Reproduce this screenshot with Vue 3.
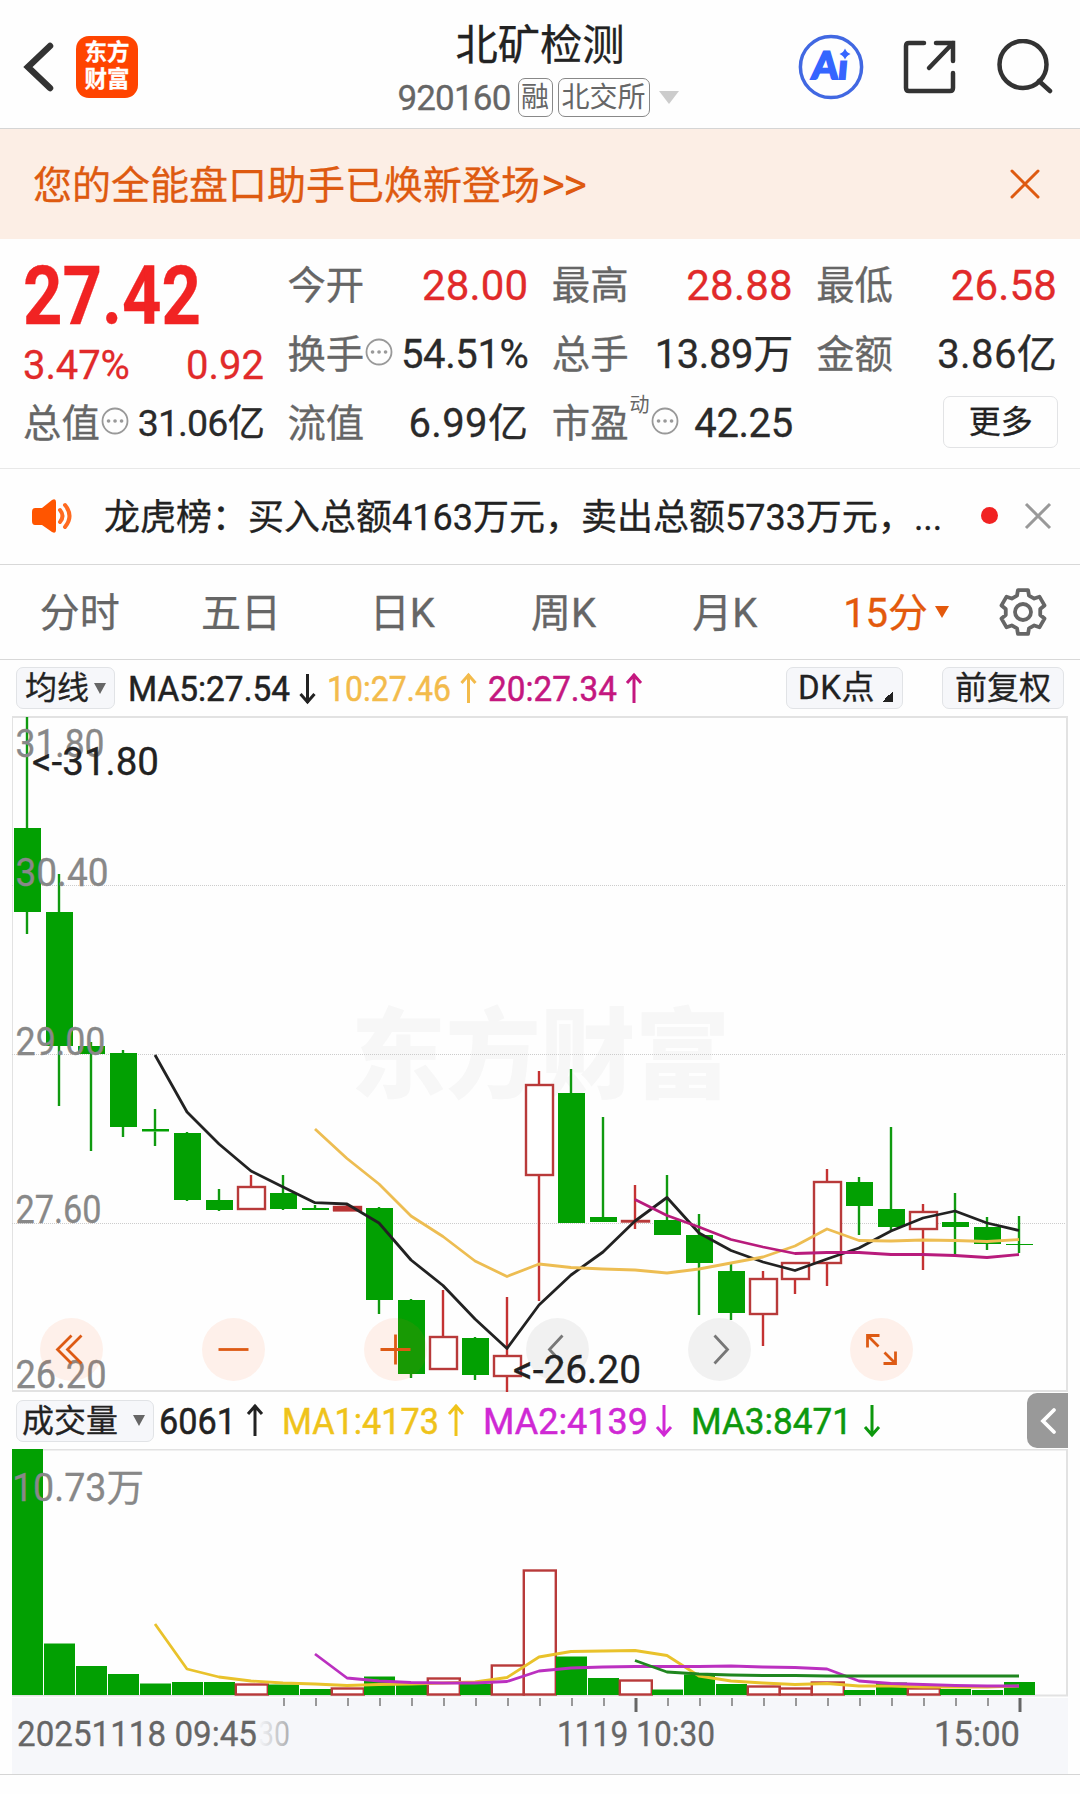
<template>
  <main class="stock-page">
    <header class="header">
      <div class="header-left">
        <svg class="back-icon" viewBox="0 0 34 56">
          <path d="M27 7 L5 28 L27 49" />
        </svg>
        <div class="brand"><span>东方</span><span>财富</span></div>
      </div>
      <div class="header-title">
        <h1>北矿检测</h1>
        <div class="stock-code">
          <span class="code">920160</span>
          <span class="tag">融</span>
          <span class="tag wide">北交所</span>
          <i class="code-arrow"></i>
        </div>
      </div>
      <div class="header-right">
        <svg class="ai-icon" viewBox="0 0 66 66">
          <text transform="translate(13 45) skewX(-5)" textLength="36" lengthAdjust="spacingAndGlyphs">Ai</text>
          <path class="ai-star-gap" d="M40 12 H54 V26.500 H40 Z" />
          <path d="M47 14.500 Q48.500 18.500 52.500 20 Q48.500 21.500 47 25.500 Q45.500 21.500 41.500 20 Q45.500 18.500 47 14.500 Z" />
          <circle cx="33" cy="33" r="30.6" />
        </svg>
        <svg class="share-icon" viewBox="0 0 56 56">
          <path d="M22 4 H7 Q4 4 4 7 V49 Q4 52 7 52 H48 Q51 52 51 49 V34 M34 4 H51 V22 M51 4 L27 29" />
        </svg>
        <svg class="search-icon" viewBox="0 0 56 56">
          <circle cx="26" cy="25.500" r="23.500" />
          <path d="M42 42 L53 52" />
        </svg>
      </div>
    </header>

    <section class="banner">
      <p>您的全能盘口助手已焕新登场<span>&gt;&gt;</span></p>
      <svg viewBox="0 0 32 32"><path d="M3 3 L29 29 M29 3 L3 29" /></svg>
    </section>

    <section class="quote">
      <div class="quote-col first">
        <strong class="price">27.42</strong>
        <div class="change"><span>3.47%</span><span>0.92</span></div>
        <div class="cell">
          <label>总值</label>
          <svg class="more-dot" viewBox="0 0 28 28"><circle cx="14" cy="14" r="12.500" /><path d="M7.500 14 h.1 M14 14 h.1 M20.500 14 h.1" /></svg>
          <b class="unit tight">31.06亿</b>
        </div>
      </div>
      <div v-for="(col, i) in quoteCols" :key="i" class="quote-col">
        <div v-for="cell in col" :key="cell.label" class="cell">
          <label>{{ cell.label }}</label>
          <sup v-if="cell.sup">{{ cell.sup }}</sup>
          <svg v-if="cell.info" class="more-dot" viewBox="0 0 28 28"><circle cx="14" cy="14" r="12.500" /><path d="M7.500 14 h.1 M14 14 h.1 M20.500 14 h.1" /></svg>
          <b :class="{ up: cell.up, unit: cell.unit, loose: cell.loose }">{{ cell.value }}</b>
        </div>
        <button v-if="i === 2" class="more-button" type="button">更多</button>
      </div>
    </section>

    <section class="news">
      <svg class="speaker" viewBox="0 0 42 36">
        <path class="horn" d="M4 10 H11 L21 2 Q25 0 25 4 V32 Q25 36 21 34 L11 27 H4 Q1 27 1 23 V14 Q1 10 4 10 Z" />
        <path class="wave" d="M29 12 Q34 18 29 24 M34 7 Q43 18 34 29" />
      </svg>
      <p>龙虎榜：买入总额4163万元，卖出总额5733万元，<span>...</span></p>
      <i class="news-dot"></i>
      <svg class="news-close" viewBox="0 0 30 30"><path d="M3 3 L27 27 M27 3 L3 27" /></svg>
    </section>

    <nav class="tabs">
      <button v-for="tab in tabs" :key="tab" type="button" :class="{ active: tab === '15分' }">
        {{ tab }}<i v-if="tab === '15分'"></i>
      </button>
      <div class="gear">
        <svg viewBox="-26 -26 52 52">
          <polygon :points="gearPoints" />
          <circle r="8" />
        </svg>
      </div>
    </nav>

    <section class="indicator">
      <button class="pill ma" type="button">均线<i class="caret"></i></button>
      <svg class="legend" viewBox="0 0 520 56">
        <g v-for="item in maLegend" :key="item.text" :fill="item.color" :stroke="item.color">
          <text :x="item.x" y="41" :textLength="item.w" lengthAdjust="spacingAndGlyphs">{{ item.text }}</text>
          <path class="arrow" :d="arrow(item.ax, item.up, 14, 43)" />
        </g>
      </svg>
      <button class="pill dk" type="button">DK点<i></i></button>
      <button class="pill right" type="button">前复权</button>
    </section>

    <svg class="chart" viewBox="0 716 1080 676">
      <text class="watermark" x="351" y="1090" textLength="379" lengthAdjust="spacingAndGlyphs">东方财富</text>
      <path class="frame-left" d="M12.500 716 V1392" />
      <path class="frame" d="M12 717 H1067 V1391 H12" />
      <path class="grid" d="M12 885.500 H1066 M12 1054.500 H1066 M12 1223.500 H1066" />

      <g v-for="(c, i) in candles" :key="i" :class="c[0] ? 'rise' : 'fall'">
        <path v-if="c[1] < c[2]" class="wick" :d="`M${cx(i)} ${c[1]} V${c[2]}`" />
        <path v-if="c[4] > c[3]" class="wick" :d="`M${cx(i)} ${c[3]} V${c[4]}`" />
        <rect v-if="c[0]" :x="cx(i) - 13" :y="c[2] + 1" width="27" :height="Math.max(c[3] - c[2] - 2, 0.5)" />
        <rect v-else :x="cx(i) - 13" :y="c[2]" width="27" :height="c[3] - c[2]" />
      </g>
      <rect class="flat-body" :x="cx(10) - 14" y="1206" width="29" height="5.500" />

      <polyline class="line" stroke="#222" :points="linePoints(ma5, 4)" />
      <polyline class="line" stroke="#edbd52" :points="linePoints(ma10, 9)" />
      <polyline class="line" stroke="#b81b7c" :points="linePoints(ma20, 19)" />

      <text v-for="p in priceLabels" :key="p.text" class="axis-text" x="15.500" :y="p.y" :textLength="p.w" lengthAdjust="spacingAndGlyphs">{{ p.text }}</text>
      <text class="mark-text" x="32" y="775" textLength="127" lengthAdjust="spacingAndGlyphs">&lt;-31.80</text>

      <g v-for="(tool, i) in tools" :key="i" :class="['tool', tool.gray ? 'gray' : '']" :transform="`translate(${71.5 + i * 162} 1349.5)`">
        <circle r="31.500" />
        <path :d="tool.d" />
      </g>
      <text class="mark-text" x="513" y="1383" textLength="128" lengthAdjust="spacingAndGlyphs">&lt;-26.20</text>
    </svg>

    <section class="volume-head">
      <button class="pill vol" type="button">成交量<i class="caret"></i></button>
      <svg class="legend vol-legend" viewBox="0 0 740 57">
        <g v-for="item in volLegend" :key="item.text" :fill="item.color" :stroke="item.color">
          <text :x="item.x" y="41.500" :textLength="item.w" lengthAdjust="spacingAndGlyphs">{{ item.text }}</text>
          <path class="arrow" :d="arrow(item.ax, item.up, 13, 44)" />
        </g>
      </svg>
      <button class="drawer" type="button">
        <svg viewBox="0 0 20 30"><path d="M16 4 L5 15 L16 26" /></svg>
      </button>
    </section>

    <svg class="volume" viewBox="0 1449 1080 248">
      <path class="frame-left" d="M12.500 1449 V1696" />
      <path class="frame" d="M12 1449.500 H1067 V1695.500 H12" />
      <g v-for="(v, i) in volumes" :key="i" :class="candles[i][0] ? 'rise' : 'fall'">
        <rect v-if="candles[i][0]" :x="11.8 + i * 32" :y="v + 0.5" width="32" :height="1694 - v" />
        <rect v-else :x="12 + i * 32" :y="v" width="31" :height="1695 - v" />
      </g>
      <polyline class="line" stroke="#e9c22b" :points="linePoints(vol1, 4)" />
      <polyline class="line" stroke="#bb30c0" :points="linePoints(vol2, 9)" />
      <polyline class="line" stroke="#1f861f" :points="linePoints(vol3, 19)" />
      <text class="axis-text" x="12" y="1501" textLength="132" lengthAdjust="spacingAndGlyphs">10.73万</text>
    </svg>

    <svg class="timeline" viewBox="0 1697 1080 97">
      <defs>
        <linearGradient id="fade">
          <stop offset="0" stop-color="#666" stop-opacity="0" />
          <stop offset="1" stop-color="#666" stop-opacity="0.5" />
        </linearGradient>
      </defs>
      <rect class="time-bg" x="12" y="1698" width="1056" height="76" />
      <path
        v-for="n in 24"
        :key="n"
        :class="['tick', { big: n === 12 || n === 24 }]"
        :d="`M${252 + n * 32} 1698 v${n === 12 || n === 24 ? 14 : 8}`"
      />
      <text x="258" y="1746" textLength="32" lengthAdjust="spacingAndGlyphs" fill="url(#fade)">30</text>
      <text x="17" y="1746" textLength="240" lengthAdjust="spacingAndGlyphs">20251118 09:45</text>
      <text x="557" y="1746" textLength="158" lengthAdjust="spacingAndGlyphs">1119 10:30</text>
      <text x="934" y="1746" textLength="86" lengthAdjust="spacingAndGlyphs">15:00</text>
      <path class="bottom-line" d="M0 1774.500 H1080" />
    </svg>
  </main>
</template>

<script setup>
const quoteCols = [
  [
    { label: '今开', value: '28.00', up: true },
    { label: '换手', value: '54.51%', info: true },
    { label: '流值', value: '6.99亿', unit: true, loose: true }
  ],
  [
    { label: '最高', value: '28.88', up: true },
    { label: '总手', value: '13.89万', unit: true },
    { label: '市盈', value: '42.25', sup: '动', info: true }
  ],
  [
    { label: '最低', value: '26.58', up: true },
    { label: '金额', value: '3.86亿', unit: true, loose: true }
  ]
]

const tabs = ['分时', '五日', '日K', '周K', '月K', '15分']

const maLegend = [
  { text: 'MA5:27.54', x: 8, w: 162, ax: 187.5, up: false, color: '#222222' },
  { text: '10:27.46', x: 207, w: 124, ax: 348.5, up: true, color: '#f3bb4b' },
  { text: '20:27.34', x: 368, w: 129, ax: 514, up: true, color: '#c4177f' }
]

const volLegend = [
  { text: '6061', x: 2, w: 77, ax: 98, up: true, color: '#222222' },
  { text: 'MA1:4173', x: 125, w: 157, ax: 299, up: true, color: '#efc31a' },
  { text: 'MA2:4139', x: 326, w: 165, ax: 507, up: false, color: '#cf28d4' },
  { text: 'MA3:8471', x: 534, w: 161, ax: 715, up: false, color: '#0d980d' }
]

const priceLabels = [
  { text: '31.80', y: 757, w: 89 },
  { text: '30.40', y: 886, w: 93 },
  { text: '29.00', y: 1055, w: 90 },
  { text: '27.60', y: 1223, w: 86 },
  { text: '26.20', y: 1388, w: 91 }
]

// [涨, 最高, 实体上沿, 实体下沿, 最低]
const candles = [
  [0, 717, 828, 912, 934], [0, 874, 912, 1046, 1106],
  [0, 1042, 1046, 1054, 1151], [0, 1050, 1053, 1127, 1137],
  [0, 1109, 1129, 1131.5, 1146], [0, 1132, 1133, 1200, 1201],
  [0, 1189, 1200, 1210, 1211], [1, 1175, 1186, 1210, 1210],
  [0, 1175, 1193, 1209, 1210], [0, 1205, 1208, 1210, 1210],
  [1, 1205, 1206, 1211, 1211], [0, 1207, 1208, 1300, 1314],
  [0, 1299, 1300, 1374, 1378], [1, 1290, 1336, 1370, 1370],
  [0, 1337, 1338, 1375, 1380], [1, 1297, 1355, 1377, 1392],
  [1, 1071, 1084, 1176, 1301], [0, 1069, 1093, 1223, 1223],
  [0, 1117, 1217, 1222, 1222], [1, 1185, 1220, 1222, 1229],
  [0, 1175, 1220, 1235, 1235], [0, 1214, 1235, 1263, 1315],
  [0, 1264, 1271, 1313, 1320], [1, 1271, 1278, 1315, 1346],
  [1, 1262, 1262, 1280, 1294], [1, 1169, 1181, 1264, 1286],
  [0, 1177, 1182, 1206, 1235], [0, 1127, 1209, 1227, 1230],
  [1, 1204, 1211, 1230, 1270], [0, 1193, 1222, 1227, 1256],
  [0, 1217, 1227, 1244, 1250], [0, 1216, 1244, 1245, 1253]
]

const ma5 = [1055, 1112, 1144, 1171, 1187, 1202.7, 1204, 1223, 1260, 1285.5, 1319, 1348.5, 1305, 1275, 1252, 1221, 1197.5, 1233, 1250.5, 1262, 1270.5, 1259, 1248, 1231, 1218, 1211, 1223, 1230.5]
const ma10 = [1129, 1158.5, 1184, 1216, 1236.5, 1261, 1276.5, 1264, 1267.5, 1269, 1270, 1273, 1269, 1263, 1257, 1246, 1229, 1240.5, 1241, 1240, 1240.5, 1241.5, 1239.5]
const ma20 = [1199.5, 1215.5, 1227, 1239.5, 1247, 1253.5, 1252.5, 1252.5, 1254.5, 1254.5, 1255.5, 1257.5, 1254.5]

const volumes = [1449, 1643.5, 1666, 1674, 1683.5, 1682, 1682, 1684, 1684.5, 1689, 1688, 1676.5, 1684, 1678, 1684, 1665, 1570, 1656.5, 1678, 1680, 1689.5, 1674.5, 1684, 1686, 1688, 1682, 1690, 1682.5, 1688, 1689, 1690, 1682]
const vol1 = [1624, 1669, 1677, 1681, 1683, 1684, 1685.5, 1684.5, 1684, 1683, 1682, 1677.5, 1657, 1651.5, 1651, 1650.5, 1655.5, 1676, 1681, 1683, 1684.5, 1683.5, 1686, 1686, 1687, 1687, 1687, 1686]
const vol2 = [1654, 1678, 1681, 1682.5, 1683, 1683, 1681.5, 1671, 1668, 1667, 1666.5, 1666.5, 1666.5, 1666, 1667, 1667.5, 1669, 1681, 1683.5, 1684.5, 1685.5, 1686, 1686]
const vol3 = [1660.5, 1672, 1674, 1675, 1675.5, 1675.5, 1676, 1676, 1676, 1676, 1676, 1676, 1676]

const tools = [
  { d: 'M0 -14 L-14 0 L0 14 M10 -14 L-4 0 L10 14' },
  { d: 'M-15 0 H15' },
  { d: 'M-15 0 H15 M0 -15 V15' },
  { gray: true, d: 'M5 -14 L-8 0 L5 14' },
  { gray: true, d: 'M-5 -14 L8 0 L-5 14' },
  { d: 'M-14 -2 V-14 H-2 M-14 -14 L-3 -3 M14 2 V14 H2 M14 14 L3 3' }
]

const cx = i => 27 + i * 32

const linePoints = (list, start) => list.map((y, i) => `${cx(i + start)},${y}`).join(' ')

const arrow = (x, up, top, bottom) => {
  return up
    ? `M${x} ${bottom} V${top} M${x - 7} ${top + 9} L${x} ${top + 1} L${x + 7} ${top + 9}`
    : `M${x} ${top} V${bottom} M${x - 7} ${bottom - 9} L${x} ${bottom - 1} L${x + 7} ${bottom - 9}`
}

// 六齿齿轮
const gearPoints = Array.from({ length: 6 }, (_, i) => i * 60 - 90)
  .flatMap(a => [[a - 20, 17.5], [a - 13, 22.5], [a + 13, 22.5], [a + 20, 17.5]])
  .map(([deg, r]) => {
    const rad = (deg * Math.PI) / 180
    return `${(r * Math.cos(rad)).toFixed(2)},${(r * Math.sin(rad)).toFixed(2)}`
  })
  .join(' ')
</script>

<style>
body {
  margin: 0;
  background: #ffffff;
}
</style>

<style scoped>
.stock-page {
  width: 1080px;
  height: 1794px;
  overflow: hidden;
  background: #fefefe;
  color: #222222;
  font-family: Roboto, "Noto Sans CJK SC", sans-serif;
  -webkit-text-stroke: 0.3px currentColor;
}

.stock-page * {
  box-sizing: border-box;
}

svg {
  display: block;
  flex: 0 0 auto;
  fill: none;
  -webkit-text-stroke: 0;
}

button {
  margin: 0;
  padding: 0;
  border: 0;
  background: none;
  color: inherit;
  font-family: inherit;
}

.header {
  display: grid;
  grid-template-columns: 1fr auto 1fr;
  height: 129px;
  border-bottom: 1px solid #d5d5d5;
}

.header-left {
  display: flex;
  align-items: center;
  gap: 19px;
  height: 134px;
  padding-left: 23px;
}

.back-icon {
  width: 34px;
  height: 56px;
  stroke: #333333;
  stroke-width: 6.5;
  stroke-linecap: round;
}

.brand {
  display: flex;
  flex-direction: column;
  align-items: center;
  justify-content: center;
  width: 62px;
  height: 62px;
  padding-bottom: 2px;
  border-radius: 13px;
  background: #ff4400;
  color: #ffffff;
  font-size: 22.5px;
  font-weight: 700;
  line-height: 27px;
}

.header-title {
  display: flex;
  flex-direction: column;
  align-items: center;
}

.header-title h1 {
  margin: 16px 0 0;
  font-size: 42.3px;
  font-weight: 400;
  line-height: 60px;
}

.stock-code {
  display: flex;
  align-items: center;
  height: 39px;
  margin-top: 2px;
  margin-right: 4px;
  color: #666666;
}

.code {
  margin-right: 7px;
  padding-top: 2px;
  font-size: 35px;
  letter-spacing: -0.8px;
}

.tag {
  display: flex;
  align-items: center;
  justify-content: center;
  width: 35px;
  height: 39px;
  margin-right: 5px;
  border: 1.5px solid #888888;
  border-radius: 7px;
  font-size: 28px;
  line-height: 34px;
  -webkit-text-stroke: 0;
}

.tag.wide {
  width: 92px;
}

.code-arrow {
  margin-left: 4px;
  border: 10px solid transparent;
  border-top: 13px solid #cccccc;
  border-bottom: 0;
}

.header-right {
  display: flex;
  align-items: center;
  justify-content: flex-end;
  height: 134px;
  padding-right: 27px;
}

.ai-icon {
  width: 66px;
  height: 66px;
  margin-right: 38px;
}

.ai-icon circle {
  stroke: #4168e2;
  stroke-width: 3.5;
}

.ai-icon text,
.ai-icon path {
  fill: #3565ff;
  font-family: Lato, sans-serif;
  font-size: 38px;
  font-weight: 900;
}

.ai-icon text {
  stroke: #3565ff;
  stroke-width: 1.8;
}

.ai-icon .ai-star-gap {
  fill: #fefefe;
}

.share-icon,
.search-icon {
  width: 56px;
  height: 56px;
  stroke: #333333;
  stroke-width: 4.5;
  stroke-linecap: round;
}

.share-icon {
  margin-right: 39px;
}

.banner {
  display: flex;
  align-items: center;
  justify-content: space-between;
  height: 110px;
  padding: 0 39px 0 33px;
  background: #fceee5;
  color: #de5a10;
  font-size: 39px;
}

.banner p {
  display: flex;
  align-items: center;
  height: 56px;
  margin: 0 0 5px;
}

.banner span {
  margin-left: 1px;
  padding-top: 4px;
  font-size: 46px;
  line-height: 50px;
  letter-spacing: -2px;
  -webkit-text-stroke: 0;
}

.banner svg {
  width: 32px;
  height: 32px;
  stroke: #de5a10;
  stroke-width: 3;
  stroke-linecap: round;
}

.quote {
  display: grid;
  grid-template-columns: repeat(4, 241px);
  column-gap: 23.4px;
  height: 230px;
  padding: 10px 23px 0;
  border-bottom: 1px solid #e8e8e8;
}

.cell {
  display: flex;
  align-items: center;
  height: 69px;
  font-size: 38.4px;
  white-space: nowrap;
}

.cell label {
  padding-bottom: 4px;
  color: #666666;
}

.cell b {
  margin-left: auto;
  padding-top: 3px;
  color: #2a2a2a;
  font-size: 40px;
  font-weight: 400;
  letter-spacing: -0.4px;
}

.cell b.unit {
  padding: 0 0 4px;
}

.cell b.loose {
  letter-spacing: 0.4px;
}

.cell b.up {
  color: #e12a2a;
  font-size: 42px;
  letter-spacing: 0.2px;
}

.cell b.tight {
  font-size: 37.5px;
  letter-spacing: -0.9px;
}

.cell sup {
  align-self: flex-start;
  margin: 4px 0 0 1px;
  color: #666666;
  font-size: 20px;
  line-height: 28px;
  -webkit-text-stroke: 0;
}

.more-dot {
  width: 28px;
  height: 28px;
  margin: 0 0 2px 1px;
  stroke: #999999;
  stroke-width: 1.8;
}

.more-dot path {
  stroke-width: 3.6;
  stroke-linecap: round;
}

.price {
  display: block;
  width: 204px;
  height: 93px;
  padding-top: 1px;
  color: #f12323;
  font-size: 82px;
  font-weight: 700;
  line-height: 93px;
  transform: scaleX(0.84);
  transform-origin: left;
}

.change {
  display: flex;
  justify-content: space-between;
  height: 45px;
  color: #e12a2a;
  font-size: 40px;
  line-height: 47px;
}

.change span:first-child {
  letter-spacing: -0.1px;
}

.more-button {
  display: block;
  width: 115px;
  height: 52px;
  margin: 9px -1px 0 auto;
  border: 1.5px solid #e2e3e5;
  border-radius: 7px;
  font-size: 32px;
  line-height: 46px;
}

.news {
  display: flex;
  align-items: center;
  height: 96px;
  padding: 0 27px 2px 31px;
  border-bottom: 1px solid #d8d8d8;
}

.speaker {
  width: 42px;
  height: 36px;
}

.speaker .horn {
  fill: #ff5500;
}

.speaker .wave {
  stroke: #ff6a20;
  stroke-width: 4;
  stroke-linecap: round;
}

.news p {
  flex: 1;
  margin: 0 0 4px 31px;
  font-size: 36px;
  white-space: nowrap;
}

.news-dot {
  width: 17px;
  height: 17px;
  margin-right: 25px;
  border-radius: 50%;
  background: #f12222;
}

.news-close {
  width: 30px;
  height: 30px;
  stroke: #999999;
  stroke-width: 3;
}

.tabs {
  display: grid;
  grid-template-columns: repeat(6, 161.3px) 1fr;
  height: 95px;
  border-bottom: 1px solid #d8d8d8;
}

.tabs button {
  display: flex;
  align-items: center;
  justify-content: center;
  padding: 0 2px 5px 0;
  color: #666666;
  font-size: 40px;
}

.tabs .active {
  padding-left: 20px;
  color: #e3590c;
}

.tabs i {
  margin: 4px 0 0 7px;
  border: 7.5px solid transparent;
  border-top: 12px solid #e3590c;
  border-bottom: 0;
}

.gear {
  display: flex;
  align-items: center;
  justify-content: center;
  padding-right: 2px;
}

.gear svg {
  width: 52px;
  height: 52px;
  stroke: #666666;
  stroke-width: 3.8;
  stroke-linejoin: round;
}

.indicator,
.volume-head {
  display: flex;
  align-items: center;
  height: 56px;
  padding-left: 16px;
}

.pill {
  display: flex;
  align-items: center;
  height: 42px;
  border: 1.5px solid #e1e3e6;
  border-radius: 7px;
  background: #f6f7fa;
  font-size: 32px;
  line-height: 38px;
  white-space: nowrap;
}

.pill.ma {
  width: 99px;
  padding-left: 8px;
}

.caret {
  margin-left: 5px;
  border: 6.5px solid transparent;
  border-top: 11px solid #666666;
  border-bottom: 0;
}

.legend {
  width: 520px;
  height: 56px;
  margin-left: 5px;
  overflow: visible;
}

.legend text {
  stroke-width: 0.5;
  font-size: 34.5px;
}

.legend .arrow {
  fill: none;
  stroke-width: 3;
}

.pill.dk {
  gap: 7px;
  width: 117px;
  margin-left: 146px;
  padding-left: 11px;
  font-size: 33px;
  letter-spacing: 0.6px;
}

.pill.dk i {
  width: 11px;
  height: 11px;
  margin-top: 17px;
  background: linear-gradient(135deg, transparent 50%, #222222 50%);
}

.pill.right {
  justify-content: center;
  width: 122px;
  margin-left: 39px;
}

.chart {
  width: 1080px;
  height: 676px;
  overflow: visible;
}

.frame {
  stroke: #e2e2e2;
  stroke-width: 2;
}

.frame-left {
  stroke: #e2e2e2;
}

.grid {
  stroke: #cccccc;
  stroke-dasharray: 1 1;
}

.watermark {
  fill: #f7f7f7;
  font-size: 98px;
  font-weight: 900;
}

.wick {
  stroke-width: 2.4;
}

.fall .wick {
  stroke: #0f9a0f;
}

.fall rect {
  fill: #02a002;
}

.rise .wick {
  stroke: #c43232;
}

.rise rect {
  fill: #ffffff;
  stroke: #b83a3a;
  stroke-width: 2.4;
}

.flat-body {
  fill: #b83232;
}

.line {
  stroke-width: 2.8;
  stroke-linejoin: round;
}

.axis-text,
.mark-text {
  fill: #888888;
  stroke: #888888;
  stroke-width: 0.3;
  font-size: 38px;
}

.mark-text {
  fill: #222222;
  stroke: #222222;
}

.tool circle {
  fill: rgba(255, 95, 30, 0.09);
}

.tool path {
  stroke: #dd5a14;
  stroke-width: 2.8;
}

.tool.gray circle {
  fill: rgba(0, 0, 0, 0.05);
}

.tool.gray path {
  stroke: #777777;
}

.volume-head {
  height: 57px;
}

.pill.vol {
  width: 138px;
  padding-left: 5px;
}

.pill.vol .caret {
  margin-left: 15px;
}

.legend.vol-legend {
  width: 740px;
  height: 57px;
  margin-left: 3px;
}

.vol-legend text {
  font-size: 37.5px;
}

.drawer {
  display: flex;
  align-items: center;
  justify-content: center;
  width: 41px;
  height: 55px;
  margin-left: 130px;
  border-radius: 10px 0 0 10px;
  background: #999999;
}

.drawer svg {
  width: 20px;
  height: 30px;
  stroke: #ffffff;
  stroke-width: 3.8;
  stroke-linecap: round;
}

.volume {
  width: 1080px;
  height: 248px;
}

.timeline {
  width: 1080px;
  height: 97px;
}

.timeline text {
  font-size: 35px;
}

.timeline text:not([fill]) {
  fill: #666666;
  stroke: #666666;
  stroke-width: 0.3;
}

.time-bg {
  fill: #f6f7fa;
}

.tick {
  stroke: #999999;
  stroke-width: 2;
}

.tick.big {
  stroke: #666666;
  stroke-width: 3;
}

.bottom-line {
  stroke: #d5d5d5;
}
</style>
